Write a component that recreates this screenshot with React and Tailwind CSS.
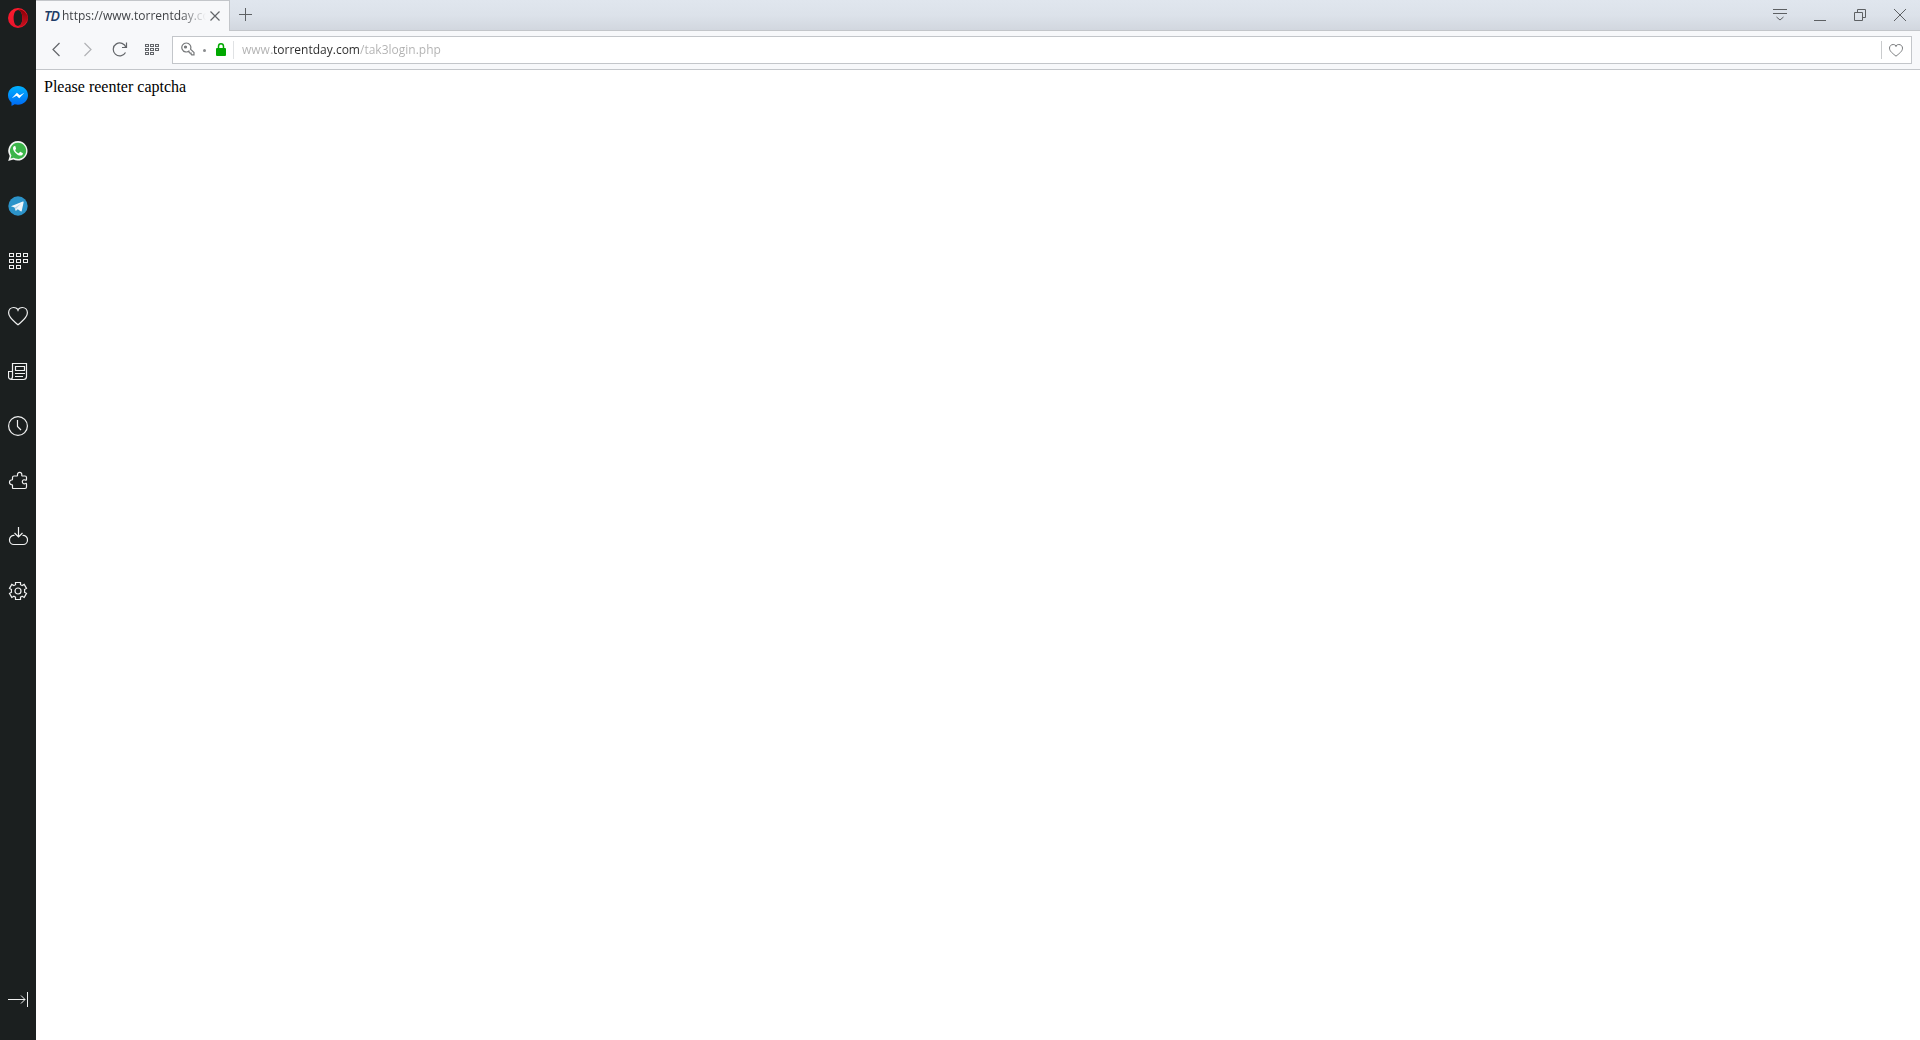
import { useState } from 'react';

const Icon = ({ size = 20, children, ...props }) => (
    <svg width={size} height={size} viewBox={`0 0 ${size} ${size}`} fill="none" stroke="currentColor" aria-hidden="true" {...props}>
        {children}
    </svg>
);

const OperaLogo = () => (
    <Icon stroke="none">
        <defs>
            <linearGradient id="opera-ring" x1="0" y1="0" x2="0" y2="1">
                <stop offset="0" stopColor="#ff1b2d" />
                <stop offset="1" stopColor="#e8142c" />
            </linearGradient>
            <linearGradient id="opera-shade" x1="0" y1="0" x2="0" y2="1">
                <stop offset="0" stopColor="#8c0008" />
                <stop offset="1" stopColor="#c8101e" />
            </linearGradient>
        </defs>
        <path fill="url(#opera-ring)" fillRule="evenodd" d="M10 0a10 10 0 1 0 0 20a10 10 0 0 0 0-20zM10 2c2.700 0 4.400 3.600 4.400 8s-1.700 8-4.400 8S5.600 14.400 5.600 10s1.700-8 4.400-8z" />
        <path fill="url(#opera-shade)" d="M8.500 2.500C9.400 1.800 10.500 1.400 11.800 1.400c2 0 3.800 1 5.100 2.600A9.900 9.900 0 0 1 20 10a9.900 9.900 0 0 1-3.100 6c-1.300 1.600-3.100 2.600-5.100 2.600c-1.300 0-2.400-.4-3.300-1.100c.5.300 1 .5 1.500.5c2.700 0 4.400-3.600 4.400-8S12.700 2 10 2c-.5 0-1 .2-1.500.5z" />
    </Icon>
);

const MessengerIcon = () => (
    <Icon stroke="none">
        <defs>
            <linearGradient id="messenger" x1="0" y1="0" x2="0" y2="1">
                <stop offset="0" stopColor="#00b2ff" />
                <stop offset="1" stopColor="#0068f5" />
            </linearGradient>
        </defs>
        <path fill="url(#messenger)" d="M10 0C4.300 0 0 4 0 9.300c0 3 1.300 5.500 3.500 7.200V20l3.200-1.800c1 .3 2.100.5 3.300.5c5.700 0 10-4.100 10-9.400S15.700 0 10 0z" />
        <path fill="#fff" d="M3.800 12.300l5.100-5.600l2.800 2.500l4.700-2.500l-5.200 5.500l-2.600-2.500z" />
    </Icon>
);

const WhatsAppIcon = () => (
    <Icon stroke="none">
        <path fill="#f4f6f4" d="M10.100 0A9.800 9.800 0 0 0 1.700 14.900L.2 20l5.200-1.400A9.800 9.800 0 1 0 10.100 0z" />
        <path fill="#3cb54a" d="M10.100 1.700a8.100 8.100 0 0 0-6.700 12.700l-.9 3.200l3.300-.9a8.100 8.100 0 1 0 4.300-15z" />
        <path fill="#fff" d="M7.400 5.300c-.2-.4-.4-.4-.7-.4c-.6 0-1.700.8-1.700 2.400c0 1.700 1.300 3.400 2.500 4.700c1.500 1.600 3.300 2.600 4.900 2.600c1.500 0 2.500-1 2.500-2.100c0-.4 0-.5-.3-.6l-2-1c-.3-.1-.5-.1-.7.2l-.8 1c-.2.200-.4.200-.7.100c-1.300-.6-2.400-1.500-3.100-2.800c-.2-.3 0-.5.100-.6l.6-.8c.1-.2.100-.4 0-.6z" />
    </Icon>
);

const TelegramIcon = () => (
    <Icon stroke="none">
        <circle cx="10" cy="10" r="9.700" fill="#2c93c9" />
        <path fill="#f0f5f9" d="M3.600 9.900l11.200-4.300c.5-.2 1 .1.800.9l-1.900 8.400c-.1.600-.6.700-1.100.4l-2.800-2.100l-1.500 1.400c-.3.300-.7.200-.8-.2l-.9-3l-2.900-.9c-.6-.2-.6-.5-.1-.6z" />
        <path fill="#b9d3e4" d="M6.900 11.600l6.300-4.200l-4.900 5l-.3 2.200z" />
    </Icon>
);

const SpeedDialIcon = () => (
    <Icon>
        {[[1, 2], [8, 2], [15, 2], [1, 8], [8, 8], [15, 8], [1, 14], [8, 14]].map(([x, y]) => (
            <rect key={`${x}-${y}`} x={x + 0.5} y={y + 0.5} width="4" height="3" />
        ))}
    </Icon>
);

const HeartIcon = () => (
    <Icon strokeWidth="1.200">
        <path d="M10 5.300V3.500C8.800 2.200 7.400 1.500 5.800 1.500C2.800 1.500.6 3.800.6 6.800c0 5 5.200 8.200 9.400 12c4.200-3.800 9.400-7 9.400-12c0-3-2.200-5.300-5.200-5.300c-1.600 0-3 .7-4.200 2" />
    </Icon>
);

const NewsIcon = () => (
    <Icon strokeWidth="1.200">
        <path d="M4.500 15.500v-13h14v13c0 1.500-1 3-3 3h-12c-2 0-3-1.500-3-3v-5h4M4.500 15.500c0 2-1 3-2.500 3" />
        <path d="M7.500 5.500h9v4h-9zM7 12.500h10M7 15.500h8" />
    </Icon>
);

const HistoryIcon = () => (
    <Icon strokeWidth="1.200">
        <circle cx="10" cy="10" r="9.400" />
        <path d="M9.500 4v6.500l3.500 3.500" />
    </Icon>
);

const ExtensionsIcon = () => (
    <Icon strokeWidth="1.200">
        <path d="M5 17.500h12c1 0 1.500-.5 1.500-1.500v-3c0-.6-.5-.8-1-.5c-1.700.9-3.200-.1-3.200-1.700s1.500-2.600 3.200-1.700c.5.300 1 .1 1-.5V6.500c0-1-.5-1.500-1.500-1.500h-2.400c-.7 0-.9-.4-.8-1c.2-1.600-.6-2.700-2.100-2.700S9.300 2.400 9.500 4c.1.600-.1 1-.8 1H6c-1 0-1.500.5-1.500 1.500v1.700c0 .5-.3.800-.9.800C2.200 9.100 1.500 10 1.500 11.300s.8 2.200 2.100 2.300c.6 0 .9.300.9.800v2.600c0 .3.200.5.500.5z" />
    </Icon>
);

const DownloadsIcon = () => (
    <Icon strokeWidth="1.200">
        <path d="M10.500 1v10M6.500 7l4 4l4-4M6.500 9.500a4.300 4.300 0 0 0-5 4.400c0 2.500 1.800 4.600 4.300 4.600h9.400c2.500 0 4.300-2.100 4.300-4.600a4.300 4.300 0 0 0-5-4.400" />
    </Icon>
);

const SettingsIcon = () => (
    <Icon strokeWidth="1.200">
        <path d="M7.500 1.500h5v2.200c.6.200 1.100.5 1.600.9l2.100-1.200l2.300 4l-2 1.200c.2.900.2 1.700 0 2.600l2 1.200l-2.300 4l-2.100-1.200c-.5.400-1 .7-1.600.9v2.400h-5v-2.400c-.6-.2-1.100-.5-1.600-.9l-2.100 1.200l-2.300-4l2-1.200c-.2-.9-.2-1.700 0-2.600l-2-1.200l2.300-4l2.100 1.200c.5-.4 1-.7 1.600-.9z" />
        <circle cx="10" cy="10" r="3" />
    </Icon>
);

const sidebarItems = [
    { label: 'Messenger', icon: MessengerIcon },
    { label: 'WhatsApp', icon: WhatsAppIcon },
    { label: 'Telegram', icon: TelegramIcon },
    { label: 'Speed Dial', icon: SpeedDialIcon },
    { label: 'Bookmarks', icon: HeartIcon },
    { label: 'News', icon: NewsIcon },
    { label: 'History', icon: HistoryIcon },
    { label: 'Extensions', icon: ExtensionsIcon },
    { label: 'Downloads', icon: DownloadsIcon },
    { label: 'Settings', icon: SettingsIcon },
];

const Sidebar = () => (
    <nav className="flex w-9 shrink-0 flex-col items-center bg-[#1b1f1f] pt-2 text-[#f0f1f1]">
        <button type="button" aria-label="Opera menu" className="size-5">
            <OperaLogo />
        </button>
        <div className="mt-[58px] flex flex-col gap-[35px]">
            {sidebarItems.map(({ label, icon: ItemIcon }) => (
                <button key={label} type="button" aria-label={label} className="size-5">
                    <ItemIcon />
                </button>
            ))}
        </div>
        <button type="button" aria-label="Hide sidebar" className="mt-auto mb-[30px] size-5">
            <Icon>
                <path d="M0 9.500h17M13 5.500l4 4l-4 4M19.500 2v15" />
            </Icon>
        </button>
    </nav>
);

const windowButtons = [
    { label: 'Tab menu', path: 'M1 2.500h14M1 6.500h14M4.500 10l3.500 3l3.500-3' },
    { label: 'Minimize', path: 'M2 13.500h12' },
    { label: 'Restore', path: 'M2.500 5.500h8v8h-8zM5.500 5V2.500h8v8H11' },
    { label: 'Close', path: 'M2 2l12 12M14 2L2 14' },
];

const TabStrip = () => (
    <header className="flex h-[31px] bg-linear-to-b from-[#e0e6ee] via-[#dce2ea] to-[#d1d6de]">
        <div className="flex w-[194px] items-center border-t border-r border-[#c3c6ca] bg-[#f7f8fa] pr-2 pl-2">
            <span className="w-[18px] text-sm font-semibold tracking-tighter text-[#1d3b66] italic">TD</span>
            <span className="min-w-0 flex-1 mask-r-from-80% mask-r-to-98% text-xs whitespace-nowrap text-[#404347]">
                https://www.torrentday.co
            </span>
            <button type="button" aria-label="Close tab" className="flex w-3 items-center justify-center text-[#626569]">
                <Icon size={10} strokeWidth="1.200">
                    <path d="M.5.5l9 9M9.500.5l-9 9" />
                </Icon>
            </button>
        </div>
        <div className="flex flex-1 items-center border-b border-[#c3c6ca] text-[#5d6063]">
            <button type="button" aria-label="New tab" className="flex h-full w-[30px] items-center justify-center">
                <Icon size={14}>
                    <path d="M7.500 0v13M1 6.500h13" />
                </Icon>
            </button>
            <div className="ml-auto flex h-full">
                {windowButtons.map(({ label, path }) => (
                    <button key={label} type="button" aria-label={label} className="flex w-10 items-center justify-center">
                        <Icon size={16}>
                            <path d={path} />
                        </Icon>
                    </button>
                ))}
            </div>
        </div>
    </header>
);

const AddressBar = () => {
    const [url, setUrl] = useState('www.torrentday.com/tak3login.php');

    return (
        <form className="ml-1 flex h-7 flex-1 items-center border border-[#c3c6ca] bg-white pr-px pl-2 text-[#77797b]" onSubmit={(e) => e.preventDefault()}>
            <button type="button" aria-label="Saved password" className="flex h-full w-4 items-center">
                <Icon size={16} strokeWidth="1.200">
                    <path d="M8.500 8.700A4.500 4.500 0 1 1 9.500 7.200L13 10.500v2.300h-2.300l-.6-.6v-1.100H9L7.300 9.400" />
                    <circle cx="4.500" cy="5" r="1" fill="currentColor" />
                </Icon>
            </button>
            <span className="ml-[6px] size-[3px] rounded-full bg-[#8a8c8e]" />
            <button type="button" aria-label="Secure connection" className="ml-[7px] flex w-4 justify-center text-[#00a800]">
                <Icon size={14}>
                    <path d="M4.500 6V3.500a2.500 2.700 0 0 1 5 0v2.500" strokeWidth="1.500" />
                    <rect x="2" y="5" width="10" height="8" rx="1" fill="currentColor" stroke="none" />
                </Icon>
            </button>
            <span className="ml-1 h-[18px] w-px bg-[#e0e2e4]" />
            <input
                type="text"
                aria-label="Address"
                spellCheck={false}
                value={url}
                onChange={(e) => setUrl(e.target.value)}
                className="ml-2 h-full min-w-0 flex-1 bg-[linear-gradient(90deg,#b0b0b0_30px,#2b2b2b_30px,#2b2b2b_118px,#b0b0b0_118px)] bg-clip-text pb-px text-xs text-transparent caret-black outline-none"
            />
            <span className="h-[18px] w-px bg-[#c9cbcd]" />
            <button type="button" aria-label="Add to bookmarks" className="flex h-full w-7 items-center justify-center">
                <Icon size={14}>
                    <path d="M7 4V2.800C6.200 1.900 5.300 1.500 4.200 1.500C2.100 1.500.5 3.100.5 5.100c0 3.400 3.500 5.500 6.500 8.100c3-2.600 6.500-4.700 6.500-8.100c0-2-1.600-3.600-3.700-3.600c-1.100 0-2 .4-2.800 1.300" />
                </Icon>
            </button>
        </form>
    );
};

const Toolbar = () => (
    <div className="flex h-[39px] items-center border-b border-[#c3c6ca] bg-[#f7f8fa] pr-2 pl-1 text-[#626569]">
        <button type="button" aria-label="Back" className="flex w-8 justify-center">
            <Icon size={16}>
                <path d="M11.500 1L5 7.500l6.500 6.500" strokeWidth="1.200" />
            </Icon>
        </button>
        <button type="button" aria-label="Forward" disabled className="flex w-8 justify-center text-[#b0b2b5]">
            <Icon size={16}>
                <path d="M4.500 1L11 7.500L4.500 14" strokeWidth="1.200" />
            </Icon>
        </button>
        <button type="button" aria-label="Reload" className="flex w-8 justify-center">
            <Icon size={16}>
                <path d="M13.500 10.500A6.500 6.500 0 1 1 14 5.500M14.500 .5v5H10" strokeWidth="1.200" />
            </Icon>
        </button>
        <button type="button" aria-label="Speed Dial" className="flex w-8 justify-center">
            <Icon size={16}>
                {[[1, 2], [6, 2], [11, 2], [1, 6], [6, 6], [11, 6], [1, 10], [6, 10]].map(([x, y]) => (
                    <rect key={`${x}-${y}`} x={x + 0.5} y={y + 0.5} width="3" height="2" />
                ))}
            </Icon>
        </button>
        <AddressBar />
    </div>
);

const App = () => (
    <div className="flex min-h-screen bg-white font-['Open_Sans','Noto_Sans',sans-serif]">
        <Sidebar />
        <div className="flex min-w-0 flex-1 flex-col">
            <TabStrip />
            <Toolbar />
            <main className="flex-1 p-2 font-['Liberation_Serif',serif] text-base leading-[18px] text-black">
                Please reenter captcha
            </main>
        </div>
    </div>
);

export default App;
